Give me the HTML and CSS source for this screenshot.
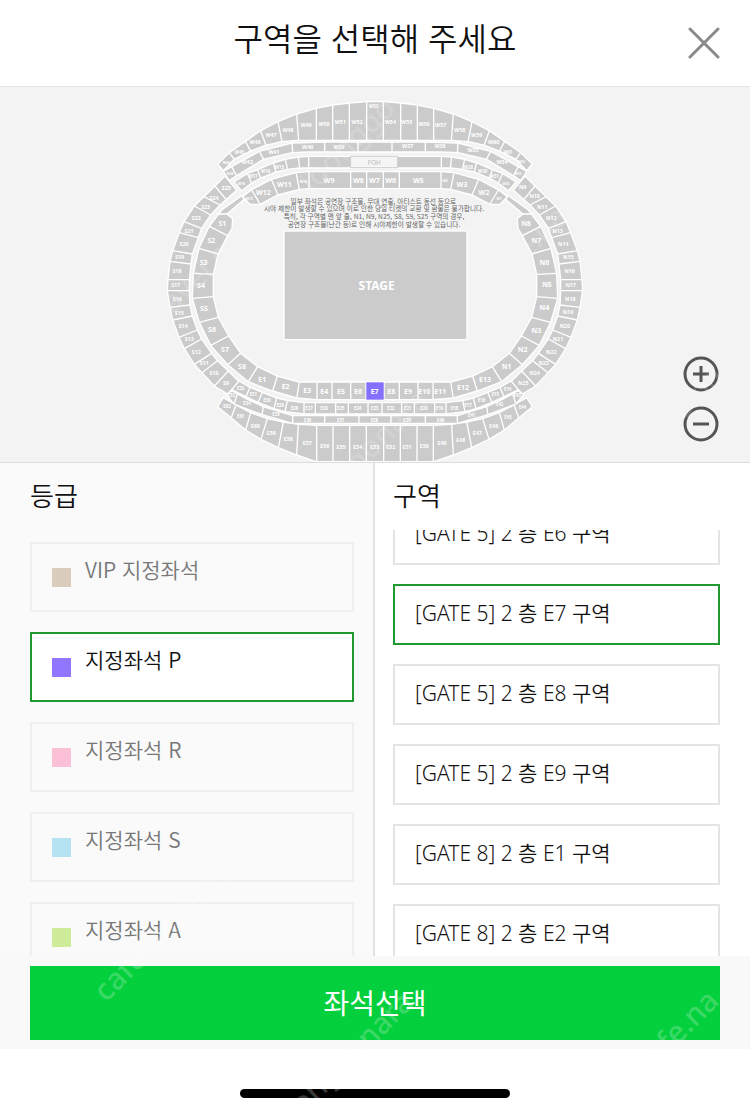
FILE: index.html
```html
<!DOCTYPE html>
<html lang="ko">
<head>
<meta charset="utf-8">
<meta name="viewport" content="width=device-width, initial-scale=1">
<title>구역을 선택해 주세요</title>
<link rel="stylesheet" href="styles.css">
</head>
<body>
<header class="header">
  <h1 class="header-title">구역을 선택해 주세요</h1>
  <button class="close" type="button" aria-label="닫기">
    <svg width="32" height="32" viewBox="0 0 32 32" aria-hidden="true"><path d="M2 2 30 30M30 2 2 30"/></svg>
  </button>
</header>

<main class="main">
  <section class="map" aria-label="좌석 배치도">
    <svg class="map-svg" viewBox="-480 -9 2250 1125" role="img" aria-label="공연장 구역">
      <defs>
        <g id="half">
          <g class="stand">
            <path d="M646 35H620L568 39 518 45 468 55 410 72 354 95 302 122 256 154 208 188 173 222 190 242 222 208 270 184 316 166 364 155 415 151H646"/>
            <path d="M646 156H494L396 159 298 184 215 230 190 244 208 272 228 258 310 208 396 188 446 186H646"/>
            <path d="M646 199H445L415 201 376 208 340 219 293 239 262 250 222 276 245 302 275 279 302 264 348 246 382 238 418 234H646"/>
            <path d="M646 245H447L408 248 334 268 275 299 248 320 270 343H300L354 315 418 298 447 296H646"/>
            <path d="M195 258 165 288 132 320 103 348 72 395 58 428 38 482 30 514 24 568 22 602 30 652 38 690 57 742 73 776 103 823 126 848 163 888 203 912 237 875 205 843 172 812 155 790 125 747 112 720 97 678 90 645 88 602V570L93 522 97 492 115 443 125 415 152 375 180 345 230 301Z"/>
            <path d="M646 929H471L410 924 338 903 265 875 203 824 152 766 118 697 97 625 100 550 117 475 148 409 185 360 245 317 253 328 201 372 218 386 216 416 203 437 174 492 160 553V620L175 682 206 738 242 790 293 830 352 858 418 876H646"/>
            <path d="M646 938H432L382 932 350 924 307 907 270 892 237 873 215 899 258 920 294 937 342 956 375 965 432 972H646"/>
            <path d="M646 977H398L310 950 258 926 216 902 199 914 222 942 306 974 398 1000H646"/>
            <path d="M646 1006H470L415 1003 370 996 322 986 272 968 228 945 190 923 173 950 215 985 257 1020 303 1048 355 1073 410 1095 468 1115H646"/>
          </g>
          <path class="line" d="M208 188 222 207M256 154 272 184M302 122 318 166M354 95 366 155M410 72 416 152M469 55V152M518 45V152M568 39V152M620 35V152
            M215 230 230 258M298 184 311 208M396 159 398 188M494 156V186M594 156V186
            M262 250 275 280M293 240 302 265M340 219 348 247M376 208 383 240M415 200 419 236M446 198V235
            M275 300 300 342M334 268 354 315M408 248 418 298M447 244V297M572 244V297M620 244V297
            M165 288 198 328M132 320 180 345M103 348 152 375M72 395 125 415M58 428 115 443M38 482 97 492M30 514 93 522M24 569H88M22 602H88M30 652 90 645M38 690 97 678M57 742 112 720M73 776 125 747M103 823 155 790M126 848 172 812M163 888 205 843
            M172 372H201M148 409 203 437M117 475 174 492M100 550 160 553M97 625 160 620M118 697 175 682M152 766 206 738M203 824 242 790M265 875 293 830M338 903 352 858M410 925 418 876M471 876V930M516 876V930M572 876V930M618 876V930
            M270 892 258 920M307 907 294 937M350 924 342 956M382 932 375 965M432 937V972M466 937V972M527 937V972M565 937V972M624 937V972
            M232 913 222 942M310 950 306 975M398 976V1000M494 976V1000M597 976V1000
            M228 945 213 985M272 968 257 1020M322 986 303 1048M370 996 355 1073M415 1003 410 1095M470 1005V1116M519 1005V1116M569 1005V1116M619 1005V1116"/>
        </g>
      </defs>
      <use href="#half"/>
      <use href="#half" transform="translate(1290 0) scale(-1 1)"/>
      <rect class="foh" x="572" y="199" width="141" height="34"/>
      <rect class="stage" x="372" y="423" width="549" height="326"/>
      <rect class="picked" x="619" y="877" width="52" height="52"/>

      <g class="l">
        <text x="507" y="271">W9</text><text x="595" y="271">W8</text><text x="643" y="271">W7</text><text x="692" y="271">W6</text><text x="775" y="271">W5</text>
        <text x="373" y="283">W11</text><text x="310" y="306">W12</text><text x="906" y="283">W3</text><text x="972" y="306">W2</text>
        <text x="187" y="400">S1</text><text x="154" y="452">S2</text><text x="131" y="517">S3</text><text x="123" y="587">S4</text><text x="132" y="654">S5</text><text x="156" y="719">S6</text><text x="195" y="777">S7</text><text x="246" y="828">S8</text>
        <text x="1098" y="399">N8</text><text x="1129" y="451">N7</text><text x="1153" y="516">N6</text><text x="1161" y="584">N5</text><text x="1153" y="653">N4</text><text x="1129" y="720">N3</text><text x="1088" y="779">N2</text><text x="1040" y="828">N1</text>
        <text x="307" y="868">E1</text><text x="377" y="890">E2</text><text x="442" y="902">E3</text><text x="493" y="903">E4</text><text x="543" y="903">E5</text><text x="594" y="903">E6</text><text x="644" y="903">E7</text><text x="694" y="903">E8</text><text x="744" y="903">E9</text><text x="793" y="903">E10</text><text x="841" y="903">E11</text><text x="909" y="893">E12</text><text x="975" y="868">E13</text>
      </g>
      <g class="m">
        <text x="285" y="157">W46</text><text x="333" y="134">W47</text><text x="384" y="119">W48</text><text x="438" y="105">W49</text><text x="492" y="101">W50</text><text x="541" y="96">W51</text><text x="591" y="97">W52</text><text x="691" y="96">W54</text><text x="740" y="96">W55</text><text x="792" y="101">W56</text><text x="842" y="104">W57</text><text x="899" y="119">W58</text><text x="950" y="134">W59</text><text x="1001" y="157">W60</text>
        <text x="262" y="216">W42</text><text x="342" y="185">W41</text><text x="443" y="170">W40</text><text x="537" y="170">W39</text><text x="743" y="169">W37</text><text x="840" y="169">W36</text><text x="939" y="181">W35</text><text x="1026" y="216">W34</text>
        <text x="199" y="293">S25</text><text x="162" y="323">S24</text><text x="137" y="352">S23</text><text x="109" y="384">S22</text><text x="87" y="422">S21</text><text x="72" y="462">S20</text><text x="59" y="501">S19</text><text x="51" y="542">S18</text><text x="47" y="585">S17</text><text x="52" y="627">S16</text><text x="58" y="669">S15</text><text x="70" y="709">S14</text><text x="88" y="747">S13</text><text x="109" y="785">S12</text><text x="133" y="819">S11</text><text x="162" y="849">S10</text><text x="198" y="880">S9</text>
        <text x="1088" y="291">N9</text><text x="1124" y="319">N10</text><text x="1147" y="352">N11</text><text x="1174" y="384">N12</text><text x="1193" y="423">N13</text><text x="1210" y="462">N14</text><text x="1225" y="501">N15</text><text x="1229" y="544">N16</text><text x="1232" y="585">N17</text><text x="1231" y="627">N18</text><text x="1224" y="667">N19</text><text x="1215" y="709">N20</text><text x="1194" y="747">N21</text><text x="1174" y="785">N22</text><text x="1151" y="819">N23</text><text x="1124" y="850">N24</text><text x="1090" y="880">N25</text>
        <text x="286" y="1007">E60</text><text x="334" y="1028">E59</text><text x="385" y="1047">E58</text><text x="442" y="1059">E57</text><text x="494" y="1067">E56</text><text x="543" y="1072">E55</text><text x="593" y="1072">E54</text><text x="644" y="1072">E53</text><text x="692" y="1072">E52</text><text x="741" y="1072">E51</text><text x="793" y="1067">E50</text><text x="846" y="1060">E49</text><text x="902" y="1049">E48</text><text x="952" y="1028">E47</text><text x="1001" y="1007">E46</text>
      </g>
      <g class="s">
        <text x="238" y="186">W45</text><text x="1044" y="187">W61</text><text x="641" y="48">W53</text>
        <text x="358" y="230">W15</text><text x="317" y="244">W16</text><text x="279" y="259">W17</text><text x="925" y="230">W28</text><text x="968" y="243">W30</text><text x="1003" y="259">W31</text>
        <text x="201" y="949">E62</text><text x="242" y="979">E61</text><text x="1087" y="950">E44</text><text x="1044" y="981">E45</text>
        <text x="242" y="893">E32</text><text x="280" y="912">E31</text><text x="321" y="931">E30</text><text x="361" y="944">E29</text><text x="403" y="955">E28</text><text x="447" y="955">E27</text><text x="492" y="955">E26</text><text x="542" y="955">E25</text><text x="593" y="955">E24</text><text x="644" y="955">E23</text><text x="692" y="955">E22</text><text x="743" y="955">E21</text><text x="792" y="955">E20</text><text x="839" y="955">E19</text><text x="883" y="955">E18</text><text x="924" y="944">E17</text><text x="965" y="930">E16</text><text x="1006" y="912">E15</text><text x="1043" y="896">E14</text>
        <text x="214" y="914">E33</text><text x="261" y="939">E34</text><text x="348" y="972">E35</text><text x="443" y="989">E36</text><text x="542" y="989">E37</text><text x="643" y="989">E38</text><text x="741" y="989">E39</text><text x="842" y="989">E40</text><text x="935" y="975">E41</text><text x="1019" y="942">E42</text><text x="1072" y="915">E43</text>
      </g>
      <g class="xs">
        <text x="199" y="216">W44</text><text x="210" y="250">W43</text><text x="1085" y="215">W62</text><text x="1074" y="249">W33</text><text x="244" y="280">W18</text><text x="1038" y="281">W32</text><text x="430" y="273">W10</text><text x="855" y="271">W4</text><text x="268" y="324">W13</text><text x="1017" y="324">W1</text>
      </g>
      <text class="foh-text" x="643" y="216">FOH</text>
      <text class="stage-text" x="650" y="586">STAGE</text>
      <g class="notice">
        <text x="640" y="332">일부 좌석은 공연장 구조물, 무대 연출, 아티스트 동선 등으로</text>
        <text x="642" y="355">시야 제한이 발생할 수 있으며 이로 인한 당일 티켓의 교환 및 환불은 불가합니다.</text>
        <text x="642" y="379">특히, 각 구역별 맨 앞 줄, N1, N9, N25, S8, S9, S25 구역의 경우,</text>
        <text x="642" y="402">공연장 구조물(난간 등)로 인해 시야제한이 발생할 수 있습니다.</text>
      </g>
    </svg>
    <div class="zoom">
      <button class="zoom-btn" type="button" aria-label="확대"><svg width="36" height="36" viewBox="0 0 36 36" aria-hidden="true"><circle cx="18" cy="18" r="16"/><path d="M10 18H26M18 10V26"/></svg></button>
      <button class="zoom-btn" type="button" aria-label="축소"><svg width="36" height="36" viewBox="0 0 36 36" aria-hidden="true"><circle cx="18" cy="18" r="16"/><path d="M10 18H26"/></svg></button>
    </div>
  </section>

  <div class="panes">
    <section class="pane pane-grade">
      <h2 class="pane-title">등급</h2>
      <div class="clip">
        <ul class="list list-grade">
          <li><button class="grade" type="button"><span class="chip chip-vip"></span><span class="grade-name">VIP 지정좌석</span></button></li>
          <li><button class="grade is-on" type="button" aria-pressed="true"><span class="chip chip-p"></span><span class="grade-name">지정좌석 P</span></button></li>
          <li><button class="grade" type="button"><span class="chip chip-r"></span><span class="grade-name">지정좌석 R</span></button></li>
          <li><button class="grade" type="button"><span class="chip chip-s"></span><span class="grade-name">지정좌석 S</span></button></li>
          <li><button class="grade" type="button"><span class="chip chip-a"></span><span class="grade-name">지정좌석 A</span></button></li>
        </ul>
      </div>
    </section>
    <section class="pane pane-area">
      <h2 class="pane-title">구역</h2>
      <div class="clip">
        <ul class="list list-area">
          <li><button class="area" type="button">[GATE 5] 2 층 E6 구역</button></li>
          <li><button class="area is-on" type="button" aria-pressed="true">[GATE 5] 2 층 E7 구역</button></li>
          <li><button class="area" type="button">[GATE 5] 2 층 E8 구역</button></li>
          <li><button class="area" type="button">[GATE 5] 2 층 E9 구역</button></li>
          <li><button class="area" type="button">[GATE 8] 2 층 E1 구역</button></li>
          <li><button class="area" type="button">[GATE 8] 2 층 E2 구역</button></li>
        </ul>
      </div>
    </section>
  </div>
</main>

<footer class="footer">
  <button class="submit" type="button">좌석선택</button>
</footer>
<div class="home"><span class="home-bar"></span></div>

<svg class="mark" viewBox="0 0 750 1113" aria-hidden="true">
  <text transform="translate(106 1003) rotate(-45)">cafe.naver.com</text>
  <g class="mark-soft">
    <text transform="translate(112 376) rotate(-45)">cafe.naver.com</text>
    <text transform="translate(652 452) rotate(-45)">cafe.na</text>
    <text transform="translate(496 292) rotate(-45)">cafe.naver</text>
    <text text-anchor="end" transform="translate(430 402) rotate(-45)">joonggonara</text>
    <text text-anchor="end" transform="translate(397 110) rotate(-45)">joonggo</text>
  </g>
  <text transform="translate(647 1076) rotate(-45)">cafe.na</text>
  <text text-anchor="end" transform="translate(415 1004) rotate(-45)">joonggonara</text>
</svg>
</body>
</html>
```
FILE: styles.css
```css
* { box-sizing: border-box; }

body {
  margin: 0;
  height: 100vh;
  display: flex;
  flex-direction: column;
  position: relative;
  overflow: hidden;
  background: #fff;
  color: #111;
  font-family: "Noto Sans CJK KR", "Noto Sans", sans-serif;
  font-weight: 350;
}

button {
  margin: 0;
  padding: 0;
  border: 0;
  background: none;
  color: inherit;
  font: inherit;
  text-align: left;
  cursor: pointer;
}

.header {
  flex: none;
  display: grid;
  grid-template-columns: 1fr auto 1fr;
  height: 87px;
  padding: 0 30px;
  border-bottom: 1px solid #e4e4e4;
}
.header-title {
  grid-column: 2;
  margin: 0;
  padding-top: 14px;
  font-size: 32px;
  line-height: 46px;
  font-weight: 350;
}
.close { justify-self: end; align-self: center; height: 32px; }
.close svg { display: block; fill: none; stroke: #8a8a8a; stroke-width: 3; stroke-linecap: round; }

.main { flex: 1; min-height: 0; display: flex; flex-direction: column; }

.map {
  flex: none;
  position: relative;
  background: #f3f3f3;
  border-bottom: 1px solid #dcdcdc;
}
.map-svg {
  display: block;
  width: 100%;
  height: 375px;
  font-family: "Noto Sans", sans-serif;
  font-weight: 700;
  text-anchor: middle;
}
.map-svg text { dominant-baseline: central; }
.stand { fill: #cbcbcb; stroke: #fff; stroke-width: 4; }
.line { fill: none; stroke: #fff; stroke-width: 4; }
.foh { fill: #f5f5f5; stroke: #d0d0d0; stroke-width: 3; }
.stage { fill: #cbcbcb; stroke: #fff; stroke-width: 4; }
.picked { fill: #8470ff; }
.l, .m, .s, .xs { fill: #fff; }
.l { font-size: 21px; }
.m { font-size: 16px; }
.s { font-size: 13px; }
.xs { font-size: 10px; }
.foh-text { font-size: 19px; font-weight: 400; fill: #b5b5b5; }
.stage-text { font-size: 36px; fill: #fff; }
.notice { font-family: "Noto Sans CJK KR", sans-serif; font-size: 20px; font-weight: 400; fill: #666; }

.zoom {
  position: absolute;
  right: 31px;
  bottom: 20px;
  display: grid;
  gap: 14px;
}
.zoom-btn { height: 36px; }
.zoom-btn svg { display: block; fill: none; stroke: #555; stroke-width: 3; }

.panes {
  flex: 1;
  min-height: 0;
  display: grid;
  grid-template-columns: 1fr 1fr;
  grid-template-rows: minmax(0, 1fr);
}
.pane { display: flex; flex-direction: column; min-height: 0; }
.pane-grade { padding-left: 30px; padding-right: 19px; background: #fafafa; border-right: 2px solid #e2e2e2; }
.pane-area { padding-left: 18px; padding-right: 30px; }
.pane-title {
  flex: none;
  margin: 0;
  padding: 12px 0 15px;
  font-size: 26px;
  line-height: 40px;
  font-weight: 350;
}
.clip { flex: 1; min-height: 0; overflow: hidden; }
.list { margin: 0; padding: 0; list-style: none; display: grid; }
.list-grade { margin-top: 12px; gap: 20px; }
.list-area { margin-top: -26px; gap: 19px; }

.grade {
  display: flex;
  align-items: flex-start;
  gap: 14px;
  width: 100%;
  height: 70px;
  padding: 10px 20px;
  border: 2px solid #efefef;
  color: #777;
  font-size: 21px;
  line-height: 30px;
}
.chip { width: 19px; height: 19px; margin-top: 14px; }
.chip-vip { background: #dacdbb; }
.chip-p { background: #9177ff; }
.chip-r { background: #fcc0d6; }
.chip-s { background: #b5e3f2; }
.chip-a { background: #cdeb98; }

.area {
  display: block;
  width: 100%;
  height: 61px;
  padding: 0 20px 4px;
  border: 2px solid #e4e4e4;
  background: #fff;
  font-family: "Noto Sans", "Noto Sans CJK KR", sans-serif;
  font-size: 21px;
  line-height: 30px;
}
.grade.is-on, .area.is-on { border-color: #1f9a30; background: #fff; color: #111; }

.footer { flex: none; padding: 10px 30px 9px; background: #f9f9f9; }
.submit {
  display: block;
  width: 100%;
  height: 74px;
  padding-bottom: 2px;
  background: #04cf3c;
  color: #fff;
  font-size: 28px;
  font-weight: 400;
  text-align: center;
}

.home { flex: none; display: flex; justify-content: center; height: 64px; padding-top: 40px; }
.home-bar { width: 36%; height: 9px; border-radius: 5px; background: #000; }

.mark {
  position: absolute;
  inset: 0;
  width: 100%;
  height: 100%;
  pointer-events: none;
  fill: #fff;
  fill-opacity: 0.22;
  font-family: "Noto Sans", sans-serif;
  font-size: 30px;
  font-weight: 500;
}
.mark-soft { fill-opacity: 0.16; }
```
